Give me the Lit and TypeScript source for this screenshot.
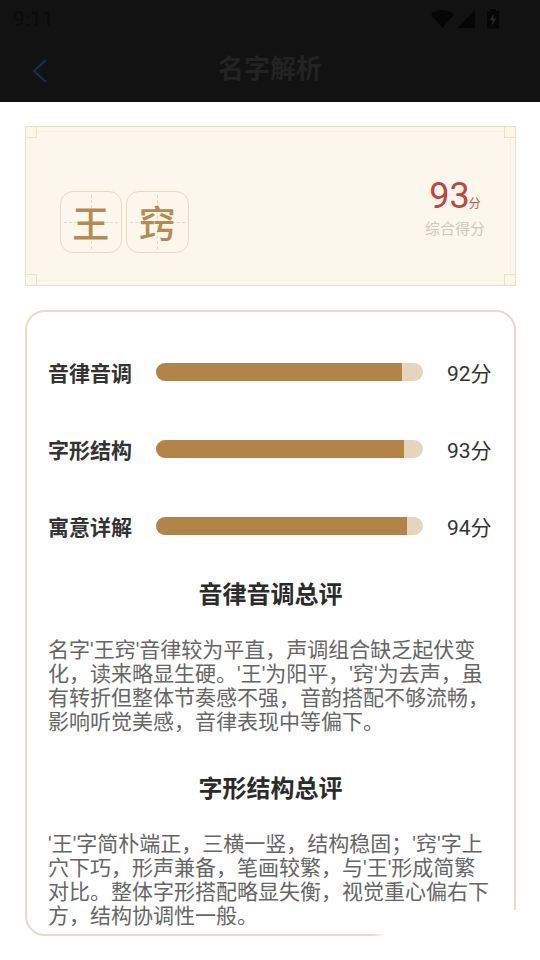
import { LitElement, html, css } from "lit";
import { customElement } from "lit/decorators.js";

const rows = [
  { label: "音律音调", score: 92 },
  { label: "字形结构", score: 93 },
  { label: "寓意详解", score: 94 },
];

@customElement("app-root")
export class AppRoot extends LitElement {
  static styles = css`
    :host {
      display: block;
      width: 540px;
      height: 960px;
      overflow: hidden;
      background: #fff;
      position: relative;
      font-family: Roboto, "Noto Sans CJK SC", sans-serif;
    }
    .top { height: 102px; background: #121212; display: flex; flex-direction: column; }
    .status {
      height: 38px; display: flex; align-items: center; justify-content: space-between;
      padding: 0 40px 0 13px; color: #0b0b0b; font-size: 21px; box-sizing: border-box;
    }
    .status svg { display: block; }
    .nav { flex: 1; position: relative; display: flex; align-items: center; justify-content: center; }
    .nav .title { font-size: 26px; font-weight: 700; color: #232323; margin-top: -8px; }
    .back { position: absolute; left: 31px; top: 20px; }
    .banner {
      margin: 24px 24px 0 25px; height: 160px; box-sizing: border-box; position: relative;
      background: #fbf7ec; border: 1.5px solid #e9e0cb;
      display: flex; align-items: flex-start; justify-content: space-between;
      padding: 63.5px 30px 0 33.5px;
    }
    .banner::before {
      content: ""; position: absolute; inset: 4px; border: 1px solid #f6f0e1; pointer-events: none;
    }
    .corner { position: absolute; width: 10px; height: 10px; border: 1px solid #e9e0cb; background: #fbf6e8; }
    .tl { left: -1px; top: -1px; }
    .tr { right: -1px; top: -1px; }
    .bl { left: -1px; bottom: -1px; }
    .br { right: -1px; bottom: -1px; }
    .chars { display: flex; gap: 4px; }
    .char {
      width: 62.5px; height: 62.5px; box-sizing: border-box; border: 1.5px solid #e3dbc5; border-radius: 13px;
      position: relative; display: flex; align-items: center; justify-content: center;
      font-size: 37px; line-height: 1; font-weight: 500; color: #b88a50;
    }
    .char::before {
      content: ""; position: absolute; left: 3px; right: 3px; top: 50%;
      border-top: 1px dashed #e0d8c2;
    }
    .char::after {
      content: ""; position: absolute; top: 3px; bottom: 3px; left: 50%;
      border-left: 1px dashed #e0d8c2;
    }
    .char span { position: relative; z-index: 1; margin-top: 8px; }
    .score { display: flex; flex-direction: column; align-items: center; margin-top: -15px; }
    .num { display: flex; align-items: baseline; color: #c0453f; font-size: 36px; line-height: 40px; }
    .num small { font-size: 12px; margin-left: -1px; color: #c0564f; }
    .sub { font-size: 15px; line-height: 20px; color: #cbc8bd; margin-top: -5px; }
    .card {
      margin: 24px 24px 0 25px; height: 626px; box-sizing: border-box;
      border: 2px solid #e6dccb; border-radius: 20px; padding: 45px 22px 0;
    }
    .rows { display: flex; flex-direction: column; gap: 47px; }
    .row { display: flex; align-items: center; height: 30px; }
    .label { flex: none; width: 108px; margin-left: -1px; font-size: 21px; font-weight: 700; color: #333; }
    .track { flex: none; width: 267px; height: 18px; border-radius: 9px; background: #e6d5bd; overflow: hidden; }
    .fill { height: 100%; background: #b28449; }
    .val { margin-left: 24px; font-size: 21px; color: #333; white-space: nowrap; }
    h2 { margin: 0; text-align: center; font-size: 24px; line-height: 32px; font-weight: 700; color: #2b2b2b; }
    .h1 { margin-top: 38px; }
    .h2 { margin-top: 39px; }
    p { margin: 27px 0 0 -1px; font-size: 21px; line-height: 24px; color: #666; }
    .patch {
      position: absolute; left: 372px; top: 910px; width: 168px; height: 50px;
      background: linear-gradient(to right, rgba(255,255,255,0), #fff 14px);
    }
  `;

  render() {
    return html`
      <div class="top">
        <div class="status">
          <span>9:11</span>
          <svg width="70" height="20" viewBox="0 0 70 20">
            <path d="M1 5.500C4 2.500 8 1 12.500 1S21 2.500 24 5.500L12.500 19Z" fill="#060606"/>
            <path d="M27 19 L45 1 V19Z" fill="#060606"/>
            <rect x="57" y="2" width="12" height="17.500" fill="#060606"/>
            <rect x="60" y="0" width="6" height="2" fill="#060606"/>
            <path d="M63.500 4.500 L60 11 H62.500 L62 16.500 L66 9.500 H63.200Z" fill="#2a2a2a"/>
          </svg>
        </div>
        <div class="nav">
          <svg class="back" width="16" height="26" viewBox="0 0 16 26">
            <path d="M15 2 L3 13 L15 24" fill="none" stroke="#1a2c5e" stroke-width="2.200"/>
          </svg>
          <span class="title">名字解析</span>
        </div>
      </div>
      <div class="banner">
        <i class="corner tl"></i><i class="corner tr"></i><i class="corner bl"></i><i class="corner br"></i>
        <div class="chars">
          <div class="char"><span>王</span></div>
          <div class="char"><span>窍</span></div>
        </div>
        <div class="score">
          <div class="num">93<small>分</small></div>
          <div class="sub">综合得分</div>
        </div>
      </div>
      <div class="card">
        <div class="rows">
          ${rows.map(
            (r) => html`<div class="row">
              <div class="label">${r.label}</div>
              <div class="track"><div class="fill" style="width:${r.score}%"></div></div>
              <div class="val">${r.score}分</div>
            </div>`
          )}
        </div>
        <h2 class="h1">音律音调总评</h2>
        <p>名字'王窍'音律较为平直，声调组合缺乏起伏变化，读来略显生硬。'王'为阳平，'窍'为去声，虽有转折但整体节奏感不强，音韵搭配不够流畅，影响听觉美感，音律表现中等偏下。</p>
        <h2 class="h2">字形结构总评</h2>
        <p>'王'字简朴端正，三横一竖，结构稳固；'窍'字上穴下巧，形声兼备，笔画较繁，与'王'形成简繁对比。整体字形搭配略显失衡，视觉重心偏右下方，结构协调性一般。</p>
      </div>
      <div class="patch"></div>
    `;
  }
}
